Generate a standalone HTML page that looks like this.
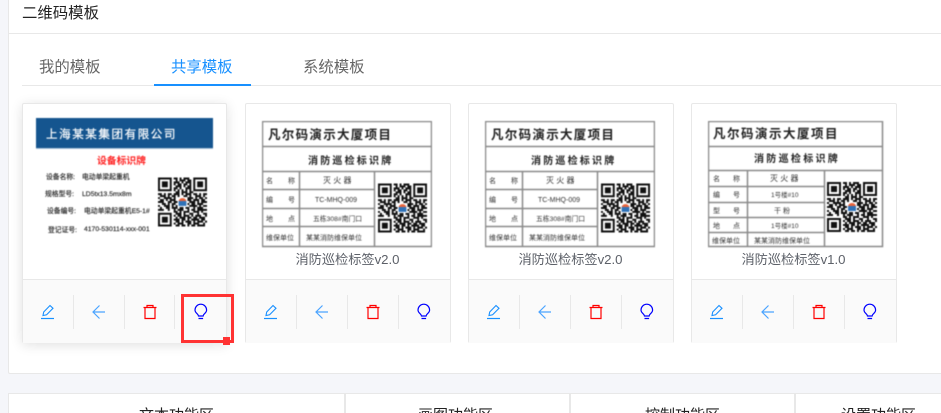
<!DOCTYPE html>
<html lang="zh"><head><meta charset="utf-8"><style>
html,body{margin:0;padding:0;width:941px;height:413px;overflow:hidden}
body{font-family:"Liberation Sans","Noto Sans CJK SC",sans-serif}
#w{position:relative;width:941px;height:413px;overflow:hidden;background:#f5f6fa}
.a{position:absolute}
.main{left:8px;top:0;width:933px;height:374px;background:#fff;border:1px solid #e8e8e8;border-top:none;border-right:none;box-sizing:border-box;border-radius:0 0 0 2px}
.tab{position:absolute;top:59px;font-size:15.400px;line-height:18px;color:#666;white-space:nowrap}
.card{position:absolute;top:103px;width:206px;height:240px;background:#fff;border:1px solid #e8e8e8;box-sizing:border-box;border-radius:2px}
.foot{position:absolute;left:0;right:0;top:175px;height:63px;background:#fafafa;border-top:1px solid #e8e8e8}
.div{position:absolute;top:15px;height:34px;width:1px;background:#e8e8e8}
.cap{position:absolute;left:0;width:100%;top:147px;text-align:center;font-size:13.200px;line-height:18px;color:#5c6068;text-indent:-1px}
.bot{position:absolute;top:393px;height:20px;overflow:hidden;background:#fff;border:1px solid #e8e8e8;border-bottom:none;box-sizing:border-box;text-align:center;font-size:15px;line-height:44px;color:#222}
svg text{font-family:"Liberation Sans","Noto Sans CJK SC",sans-serif}
.lab{position:absolute;filter:blur(.5px)}
</style></head><body><div id="w">
<svg width="0" height="0" style="position:absolute"><defs>
<symbol id="qr" viewBox="0 0 25 25"><path fill="none" stroke="#111" stroke-width="1" d="M0 .5h7M18 .5h7M0 6.500h7M18 6.500h7M0 18.500h7M0 24.500h7M.5 0v7M6.500 0v7M18.500 0v7M24.500 0v7M.5 18v7M6.500 18v7"/><path fill="#111" d="M2 2h3v3H2zM20 2h3v3h-3zM2 20h3v3H2z"/><path fill="none" stroke="#111" stroke-width="1" d="M8 .5h2M11 .5h1M13 .5h3M9 1.500h1M11 1.500h3M15 1.500h2M8 2.500h3M12 2.500h1M14 2.500h3M8 3.500h1M10 3.500h2M13 3.500h2M16 3.500h1M9 4.500h3M13 4.500h1M15 4.500h2M8 5.500h2M11 5.500h1M14 5.500h3M8 6.500h1M10 6.500h1M12 6.500h1M14 6.500h1M16 6.500h1M9 7.500h2M12 7.500h3M16 7.500h2M0 8.500h2M3 8.500h1M5 8.500h2M8 8.500h3M12 8.500h1M14 8.500h3M18 8.500h2M21 8.500h1M23 8.500h2M1 9.500h3M5 9.500h1M7 9.500h2M10 9.500h1M13 9.500h2M16 9.500h1M19 9.500h3M23 9.500h1M0 10.500h1M3 10.500h4M8 10.500h1M15 10.500h3M19 10.500h1M21 10.500h2M24 10.500h1M1 11.500h2M4 11.500h1M6 11.500h3M15 11.500h2M18 11.500h3M22 11.500h2M0 12.500h3M5 12.500h2M8 12.500h2M16 12.500h3M20 12.500h1M22 12.500h3M2 13.500h2M5 13.500h1M7 13.500h2M15 13.500h1M17 13.500h2M20 13.500h3M0 14.500h1M3 14.500h3M7 14.500h1M9 14.500h1M16 14.500h4M21 14.500h1M23 14.500h2M1 15.500h1M4 15.500h2M7 15.500h3M11 15.500h2M14 15.500h2M18 15.500h1M20 15.500h3M0 16.500h3M5 16.500h1M8 16.500h1M10 16.500h3M15 16.500h1M17 16.500h2M20 16.500h5M8 17.500h2M11 17.500h1M13 17.500h3M18 17.500h3M22 17.500h1M9 18.500h3M13 18.500h1M16 18.500h2M20 18.500h1M23 18.500h2M8 19.500h1M10 19.500h2M13 19.500h3M17 19.500h1M19 19.500h3M24 19.500h1M9 20.500h1M11 20.500h3M15 20.500h2M18 20.500h2M21 20.500h3M8 21.500h3M12 21.500h2M15 21.500h1M17 21.500h4M22 21.500h2M9 22.500h2M12 22.500h1M14 22.500h3M18 22.500h1M20 22.500h3M24 22.500h1M8 23.500h1M10 23.500h3M15 23.500h2M18 23.500h3M23 23.500h1M9 24.500h2M12 24.500h2M15 24.500h1M17 24.500h2M20 24.500h4"/><rect x="10" y="10" width="5" height="5" fill="#fff"/><path d="M10.500 12c.5-2 3.500-2 4 0z" fill="#e8643c"/><rect x="10.500" y="12" width="4" height="2.500" fill="#2f72b8"/></symbol>
<symbol id="icons" viewBox="23 280 204 62">
<path fill="none" d="M41 318.500h13" stroke="#1890ff" stroke-width="1.200"/><path fill="none" d="M43 315.500l.7-3.500 6.300-6.500 3 2.800-6.400 6.500z" stroke="#1890ff" stroke-width="1.100"/>
<path fill="none" d="M105 312H93M99.500 305.500L93 312l6.500 6.500" stroke="#4aa3ff" stroke-width="1.200"/>
<path fill="none" d="M143.500 307.500h13M147 307.500v-2h6v2M145 308v10.500h10V308" stroke="#f00" stroke-width="1.200"/>
<path fill="none" d="M198.500 316c0-2-3.500-2.800-3.500-6a5.800 5.800 0 0 1 11.600 0c0 3.200-3.500 4-3.500 6zM198.500 318.500h4.600" stroke="#00f" stroke-width="1.200"/>
</symbol>
</defs></svg>

<div class="a main"></div>
<div class="a" style="left:9px;top:33px;width:932px;height:1px;background:#e8e8e8"></div>
<div class="a" style="left:22px;top:5px;font-size:15.400px;line-height:18px;color:#222">二维码模板</div>

<div class="a" style="left:22px;top:85px;width:919px;height:1px;background:#e8e8e8"></div>
<div class="a" style="left:154px;top:84px;width:97px;height:2px;background:#1890ff"></div>
<div class="tab" style="left:39px">我的模板</div>
<div class="tab" style="left:171px;color:#1890ff">共享模板</div>
<div class="tab" style="left:303px">系统模板</div>

<!-- Card 1 -->
<div class="card" style="left:22px;width:205px;box-shadow:0 2px 12px rgba(0,0,0,.12)">
<svg class="lab" style="left:13px;top:14px" width="178" height="116" viewBox="0 0 178 116">
<rect width="177" height="30" fill="#15558f"/><rect y="30" width="177" height="1" fill="#a9c2da"/>
<text x="10" y="20" font-size="11.500" fill="#fff" letter-spacing="1.600" stroke="#fff" stroke-width=".2">上海某某集团有限公司</text>
<text x="61" y="46" font-size="9.800" fill="#f22" font-weight="bold">设备标识牌</text>
<g font-size="6.800" fill="#222" stroke="#222" stroke-width=".15">
<text x="10" y="61">设备名称:</text><text x="46" y="61">电动单梁起重机</text>
<text x="9" y="78">规格型号:</text><text x="46" y="78" font-size="6.800">LD5tx13.5mx8m</text>
<text x="11" y="95">设备编号:</text><text x="48" y="95" font-size="6.800">电动单梁起重机E5-1#</text>
<text x="12" y="114">登记证号:</text><text x="48" y="113" font-size="6.800">4170-530114-xxx-001</text>
</g>
<use href="#qr" x="122" y="57" width="49" height="54"/>
</svg>
<div class="foot">
<div class="div" style="left:50px"></div><div class="div" style="left:101px"></div><div class="div" style="left:151px"></div>
<svg class="a" style="left:0;top:0" width="204" height="62"><use href="#icons" width="204" height="62"/></svg>
</div>
</div>

<!-- Card 2 -->
<div class="card" style="left:245px">
<svg class="lab" style="left:16px;top:17px" width="170" height="127" viewBox="0 0 170 127" fill="none">
<g stroke="#8a8a8a" stroke-width="1.500"><rect x=".5" y=".5" width="169" height="125"/><path d="M0 25.500h170M0 50.500h170M0 68.500h113M0 87.500h113M0 105.500h113M37.500 50v76M112.500 50v76"/></g>
<g fill="#222" stroke="none"><text x="6" y="18" font-size="12.500" font-weight="bold" letter-spacing="1.300">凡尔码演示大厦项目</text>
<text x="46" y="43" font-size="10" font-weight="bold" letter-spacing="2.200">消防巡检标识牌</text>
<g font-size="7" fill="#333"><text x="4" y="62">名</text><text x="26" y="62">称</text><text x="61" y="62" font-size="8">灭 火 器</text>
<text x="4" y="81">编</text><text x="26" y="81">号</text><text x="53" y="81" font-size="7">TC-MHQ-009</text>
<text x="4" y="100">地</text><text x="26" y="100">点</text><text x="51" y="100" font-size="6.800">五栋308#南门口</text>
<text x="4" y="119" font-size="7">维保单位</text><text x="44" y="119" font-size="7">某某消防维保单位</text></g></g>
<use href="#qr" x="116" y="60" width="49" height="54"/>
</svg>
<div class="cap">消防巡检标签v2.0</div>
<div class="foot">
<div class="div" style="left:50px"></div><div class="div" style="left:101px"></div><div class="div" style="left:152px"></div>
<svg class="a" style="left:0;top:0" width="204" height="62"><use href="#icons" width="204" height="62"/></svg>
</div>
</div>

<!-- Card 3 -->
<div class="card" style="left:468px">
<svg class="lab" style="left:16px;top:17px" width="170" height="127" viewBox="0 0 170 127" fill="none">
<g stroke="#8a8a8a" stroke-width="1.500"><rect x=".5" y=".5" width="169" height="125"/><path d="M0 25.500h170M0 50.500h170M0 68.500h113M0 87.500h113M0 105.500h113M37.500 50v76M112.500 50v76"/></g>
<g fill="#222" stroke="none"><text x="6" y="18" font-size="12.500" font-weight="bold" letter-spacing="1.300">凡尔码演示大厦项目</text>
<text x="46" y="43" font-size="10" font-weight="bold" letter-spacing="2.200">消防巡检标识牌</text>
<g font-size="7" fill="#333"><text x="4" y="62">名</text><text x="26" y="62">称</text><text x="61" y="62" font-size="8">灭 火 器</text>
<text x="4" y="81">编</text><text x="26" y="81">号</text><text x="53" y="81" font-size="7">TC-MHQ-009</text>
<text x="4" y="100">地</text><text x="26" y="100">点</text><text x="51" y="100" font-size="6.800">五栋308#南门口</text>
<text x="4" y="119" font-size="7">维保单位</text><text x="44" y="119" font-size="7">某某消防维保单位</text></g></g>
<use href="#qr" x="116" y="60" width="49" height="54"/>
</svg>
<div class="cap">消防巡检标签v2.0</div>
<div class="foot">
<div class="div" style="left:50px"></div><div class="div" style="left:101px"></div><div class="div" style="left:152px"></div>
<svg class="a" style="left:0;top:0" width="204" height="62"><use href="#icons" width="204" height="62"/></svg>
</div>
</div>

<!-- Card 4 -->
<div class="card" style="left:691px">
<svg class="lab" style="left:16px;top:17px" width="176" height="127" viewBox="0 0 176 127" fill="none">
<g stroke="#8a8a8a" stroke-width="1.500"><rect x=".5" y=".5" width="174" height="125"/><path d="M0 25.500h175M0 49.500h175M0 65.500h117M0 81.500h117M0 96.500h117M0 111.500h117M39.500 49v77M116.500 49v77"/></g>
<g fill="#222" stroke="none"><text x="5" y="17" font-size="12.500" font-weight="bold" letter-spacing="1.500">凡尔码演示大厦项目</text>
<text x="46" y="41" font-size="10" font-weight="bold" letter-spacing="2.300">消防巡检标识牌</text>
<g font-size="7" fill="#333"><text x="5" y="60">名</text><text x="25" y="60">称</text><text x="62" y="60" font-size="8">灭 火 器</text>
<text x="5" y="76">编</text><text x="25" y="76">号</text><text x="63" y="76" font-size="6.500">1号楼#10</text>
<text x="5" y="92">型</text><text x="25" y="92">号</text><text x="66" y="92" font-size="7">干 粉</text>
<text x="5" y="107">地</text><text x="25" y="107">点</text><text x="63" y="107" font-size="6.500">1号楼#10</text>
<text x="4" y="122" font-size="7">维保单位</text><text x="46" y="122" font-size="7">某某消防维保单位</text></g></g>
<use href="#qr" x="119" y="59" width="50" height="54"/>
</svg>
<div class="cap">消防巡检标签v1.0</div>
<div class="foot">
<div class="div" style="left:50px"></div><div class="div" style="left:101px"></div><div class="div" style="left:152px"></div>
<svg class="a" style="left:0;top:0" width="204" height="62"><use href="#icons" width="204" height="62"/></svg>
</div>
</div>

<!-- Red annotation -->
<div class="a" style="left:181px;top:294px;width:53px;height:49px;border:3px solid #f33;box-sizing:border-box"></div>
<div class="a" style="left:223px;top:337px;width:7px;height:8px;background:#f33"></div>

<!-- Bottom panels -->
<div class="bot" style="left:8px;width:337px">文本功能区</div>
<div class="bot" style="left:345px;width:225px;text-indent:-4px">画图功能区</div>
<div class="bot" style="left:570px;width:225px">控制功能区</div>
<div class="bot" style="left:795px;width:146px;border-right:none;text-indent:20px">设置功能区</div>
</div></body></html>
